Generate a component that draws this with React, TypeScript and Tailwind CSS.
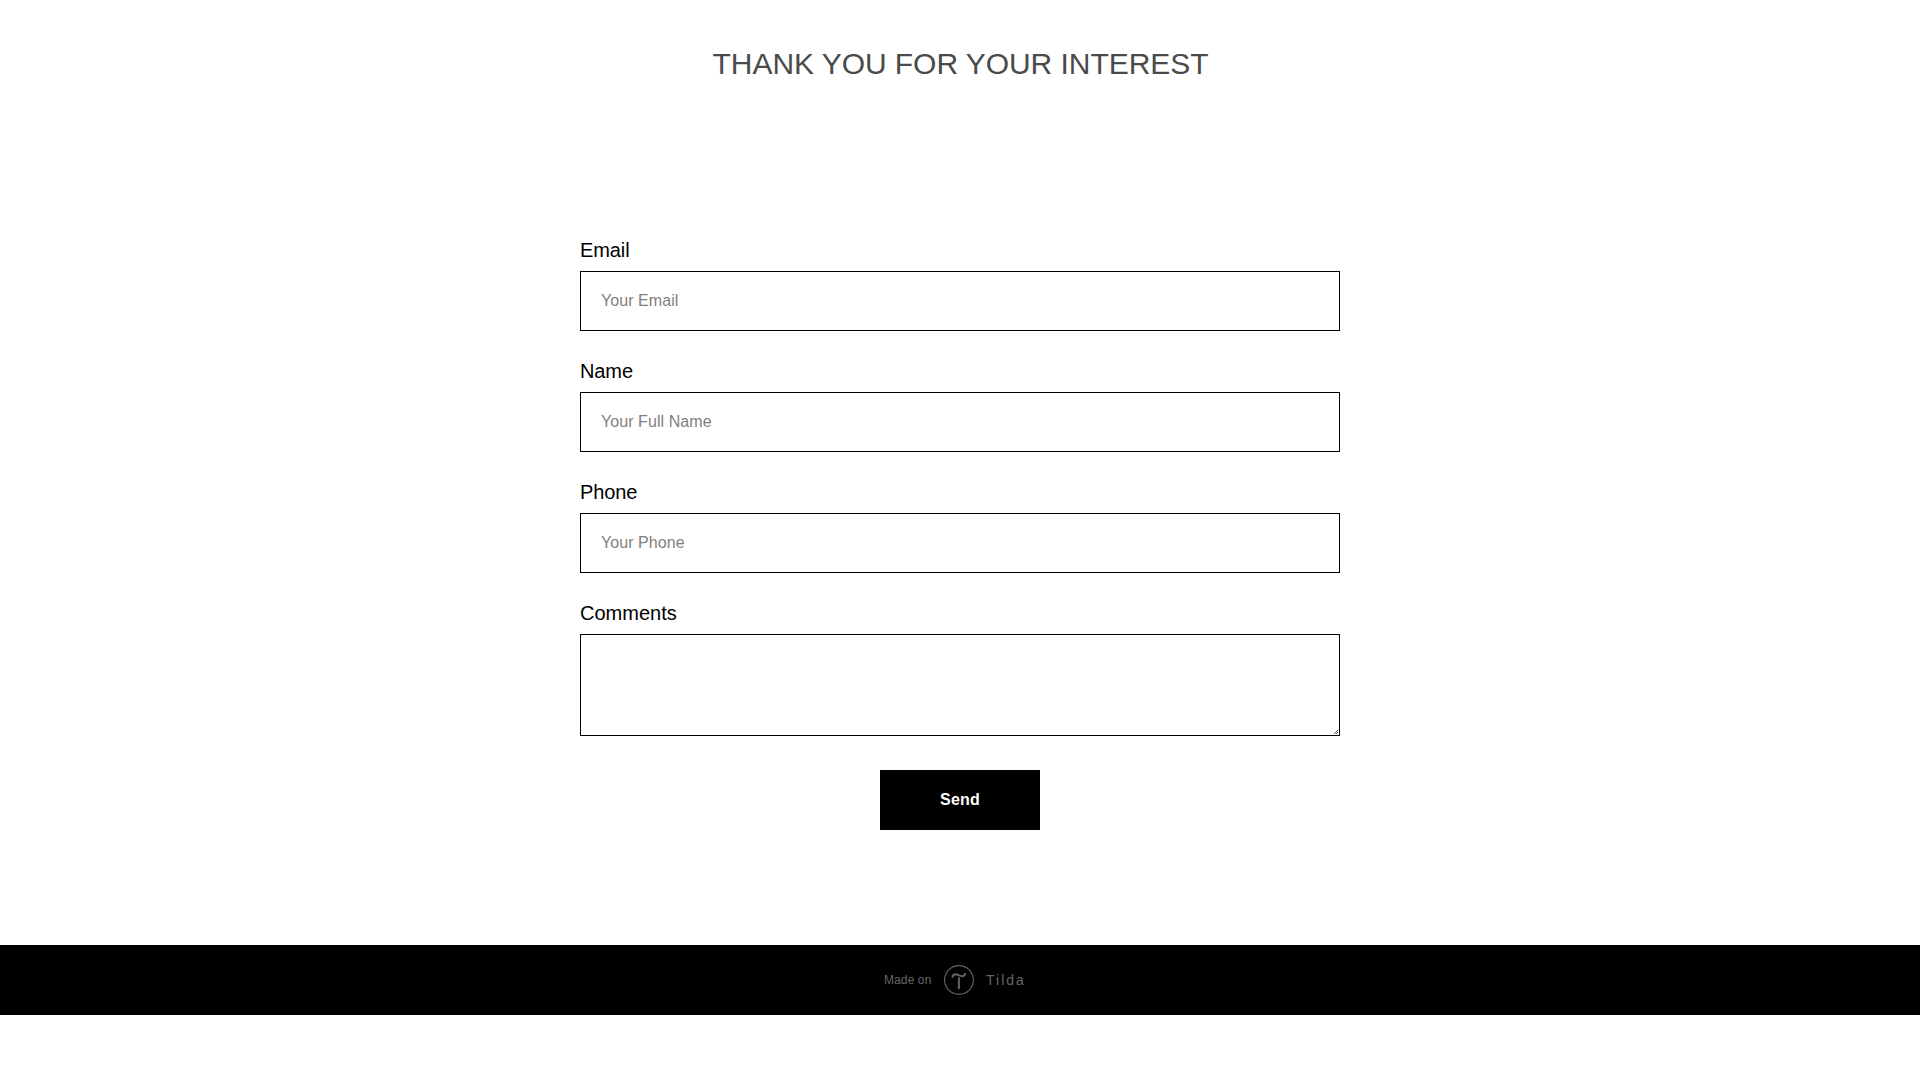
interface Field {
  id: string;
  label: string;
  type: string;
  placeholder: string;
}

const fields: Field[] = [
  { id: 'email', label: 'Email', type: 'email', placeholder: 'Your Email' },
  { id: 'name', label: 'Name', type: 'text', placeholder: 'Your Full Name' },
  { id: 'phone', label: 'Phone', type: 'tel', placeholder: 'Your Phone' },
];

function TildaLogo() {
  return (
    <svg className="w-[30px] h-[30px]" viewBox="0 0 30 30" fill="none" stroke="currentColor">
      <circle cx="15" cy="15" r="14.4" strokeWidth={1.150} />
      <path
        d="M8.500 12.700C8.700 10.300 9.600 9.200 11.300 9.200c2.200 0 4.200 2 6.700 2 1.900 0 3-1 3.300-3.100"
        strokeWidth={2}
      />
      <path d="M14.900 12.500v11.500" strokeWidth={2} />
    </svg>
  );
}

function ResizeGrip() {
  return (
    <svg
      className="pointer-events-none absolute right-[2px] bottom-[2px] h-[4px] w-[4px]"
      viewBox="0 0 4 4"
      fill="#555555"
      shapeRendering="crispEdges"
    >
      <path d="M3 0h1v1h-1zM2 1h1v1h-1zM1 2h1v1h-1zM0 3h1v1h-1zM3 2h1v1h-1zM2 3h1v1h-1z" />
    </svg>
  );
}

function App() {
  return (
    <div className="min-h-screen bg-white font-['Liberation_Sans',Arial,sans-serif]">
      <h1 className="pt-[45px] pl-px text-center text-[30px] leading-[37px] tracking-[-0.05px] text-[#4a4a4a]">
        THANK YOU FOR YOUR INTEREST
      </h1>

      <form className="mx-auto mt-[153px] w-[760px]">
        {fields.map((field) => (
          <div key={field.id} className="mb-[25px]">
            <label
              htmlFor={field.id}
              className="block pb-[5px] text-xl leading-[31px] tracking-[-0.1px] text-black"
            >
              {field.label}
            </label>
            <input
              id={field.id}
              type={field.type}
              placeholder={field.placeholder}
              className="block h-[60px] w-full border border-black px-5 text-base tracking-[0.07px] text-black placeholder:text-[#7f7f7f]"
            />
          </div>
        ))}
        <div>
          <label htmlFor="comments" className="block pb-[5px] text-xl leading-[31px] text-black">
            Comments
          </label>
          <div className="relative">
            <textarea
              id="comments"
              className="block h-[102px] w-full resize-none border border-black px-5 pt-[17px] text-base text-black"
            />
            <ResizeGrip />
          </div>
        </div>
        <button
          type="button"
          className="mx-auto mt-[34px] block h-[60px] w-40 bg-black text-base font-bold tracking-[0.2px] text-white"
        >
          Send
        </button>
      </form>

      {/* Footer */}
      <footer className="mt-[115px] flex h-[70px] items-center justify-center bg-black text-[#656565]">
        <span className="w-[60px] text-xs tracking-[0.1px]">Made on</span>
        <TildaLogo />
        <span className="w-[62px] pl-3 text-sm tracking-[2px]">Tilda</span>
      </footer>
    </div>
  );
}

export default App;
